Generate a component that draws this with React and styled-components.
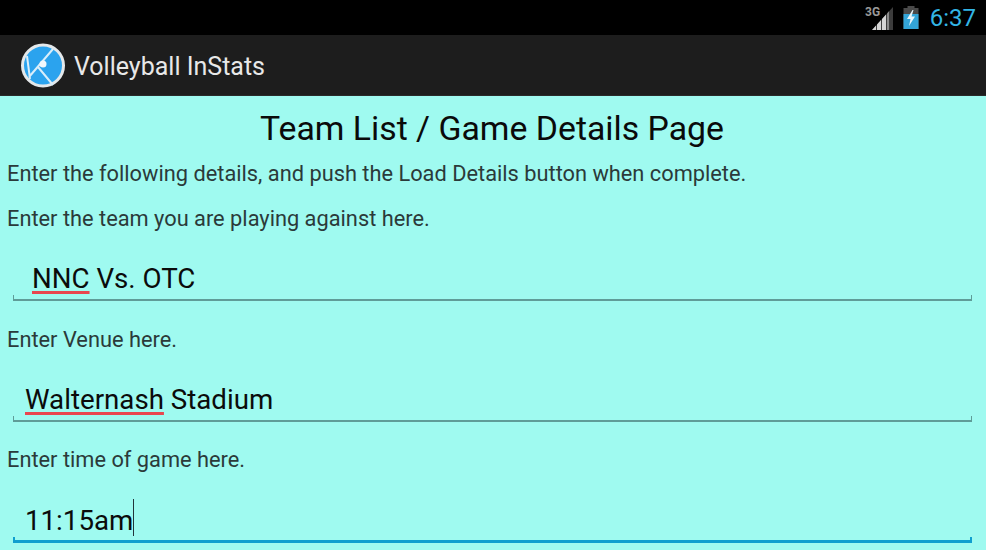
import React from "react";
import styled, { createGlobalStyle } from "styled-components";

const GlobalStyle = createGlobalStyle`
  html, body {
    margin: 0;
    padding: 0;
    height: 550px;
    overflow: hidden;
    background: #9ffaf0;
  }
`;

const Screen = styled.div`
  width: 986px;
  height: 550px;
  overflow: hidden;
  font-family: Roboto, "Liberation Sans", sans-serif;
  display: flex;
  flex-direction: column;
`;

const StatusBar = styled.div`
  height: 35px;
  flex: none;
  background: #000;
  display: flex;
  align-items: center;
  justify-content: flex-end;
  padding-right: 10px;
`;

const StatusIcons = styled.div`
  display: flex;
  align-items: center;
  gap: 9px;
`;

const StatusClock = styled.span`
  font-size: 24px;
  line-height: 30px;
  color: #33b5e5;
  margin-left: 11px;
`;

const ActionBar = styled.div`
  height: 61px;
  flex: none;
  box-sizing: border-box;
  background: #1d1d1d;
  border-bottom: 1px solid #2a2a2a;
  display: flex;
  align-items: center;
  padding: 1px 0 0 21px;
  gap: 9px;
`;

const AppTitle = styled.span`
  font-size: 25px;
  color: #e8e8e8;
  line-height: 34px;
  padding-top: 2px;
`;

const Content = styled.div`
  flex: 1;
  background: #9ffaf0;
  padding: 0 14px 0 7px;
`;

const PageTitle = styled.h1`
  margin: 13px 0 0 5px;
  font-size: 33.8px;
  font-weight: 400;
  line-height: 40px;
  text-align: center;
  color: #0a0a0a;
`;

const Hint = styled.p`
  margin: ${(p) => p.$top}px 0 0;
  font-size: 21.8px;
  line-height: 28px;
  color: #2b3a3a;
`;

const Field = styled.div`
  margin: ${(p) => p.$top || 30}px 0 0 6px;
`;

const FieldText = styled.div`
  height: 32px;
  padding-left: ${(p) => p.$indent}px;
  font-size: 27.7px;
  line-height: 31px;
  color: #0b0b0b;
  white-space: nowrap;
`;

const Misspelled = styled.span`
  text-decoration: underline;
  text-decoration-color: #e8474f;
  text-decoration-thickness: 3px;
  text-underline-offset: 3px;
  text-decoration-skip-ink: none;
`;

const Caret = styled.span`
  display: inline-block;
  width: 1px;
  height: 37px;
  margin: -6px 0 0;
  background: #22333a;
  vertical-align: top;
`;

const FieldLine = styled.div`
  box-sizing: border-box;
  height: 6px;
  border: ${(p) => (p.$focused ? "2px" : "1px")} solid
    ${(p) => (p.$focused ? "#0f9fcf" : "#5f9c98")};
  border-top: none;
  border-bottom-width: ${(p) => (p.$focused ? "3px" : "2px")};
`;

const SignalIcon = () => (
  <svg width="29" height="26" viewBox="0 0 29 26">
    <text x="0" y="11" fontFamily="Roboto, sans-serif" fontSize="12" fontWeight="700" fill="#9a9a9a">
      3G
    </text>
    <path d="M7 25 L28 2 V25 Z" fill="#3c3c3c" />
    <path d="M7 25 L11 20.6 V25 Z M12 25 V19.5 L16 15.1 V25 Z M17 25 V14 L21 9.6 V25 Z" fill="#d4d4d4" />
    <path d="M22 25 V8.5 L24 6.3 V25 Z" fill="#8a8a8a" />
  </svg>
);

const BatteryIcon = () => (
  <svg width="16" height="23" viewBox="0 0 16 23">
    <rect x="4.5" y="0" width="7" height="2.5" fill="#4a4a4a" />
    <rect x="0.5" y="2" width="15" height="21" fill="#4a4a4a" />
    <rect x="0.5" y="8" width="15" height="15" fill="#33a5d8" />
    <path d="M9.5 4 L4 13 H7.5 L6 20 L12 10.5 H8.5 L10.5 4 Z" fill="#e8f6fb" />
  </svg>
);

const AppLogo = () => (
  <svg width="44" height="45" viewBox="0 0 44 45">
    <circle cx="22" cy="22.5" r="20.5" fill="#2ba3ee" stroke="#e4e8ea" strokeWidth="3" />
    <path d="M6 13 L9 36 M8 34 L32 6 M17 24 L32 42" stroke="#d8eefb" strokeWidth="2" fill="none" />
    <circle cx="22" cy="21" r="3.5" fill="#f2f8fc" />
  </svg>
);

export default function App() {
  return (
    <Screen>
      <GlobalStyle />
      <StatusBar>
        <StatusIcons>
          <SignalIcon />
          <BatteryIcon />
        </StatusIcons>
        <StatusClock>6:37</StatusClock>
      </StatusBar>
      <ActionBar>
        <AppLogo />
        <AppTitle>Volleyball InStats</AppTitle>
      </ActionBar>
      <Content>
        <PageTitle>Team List / Game Details Page</PageTitle>
        <Hint $top={11}>Enter the following details, and push the Load Details button when complete.</Hint>
        <Hint $top={17}>Enter the team you are playing against here.</Hint>
        <Field>
          <FieldText $indent={19}>
            <Misspelled>NNC</Misspelled> Vs. OTC
          </FieldText>
          <FieldLine />
        </Field>
        <Hint $top={25}>Enter Venue here.</Hint>
        <Field>
          <FieldText $indent={12}>
            <Misspelled>Walternash</Misspelled> Stadium
          </FieldText>
          <FieldLine />
        </Field>
        <Hint $top={24}>Enter time of game here.</Hint>
        <Field $top={31}>
          <FieldText $indent={12}>
            11:15am
            <Caret />
          </FieldText>
          <FieldLine $focused />
        </Field>
      </Content>
    </Screen>
  );
}
